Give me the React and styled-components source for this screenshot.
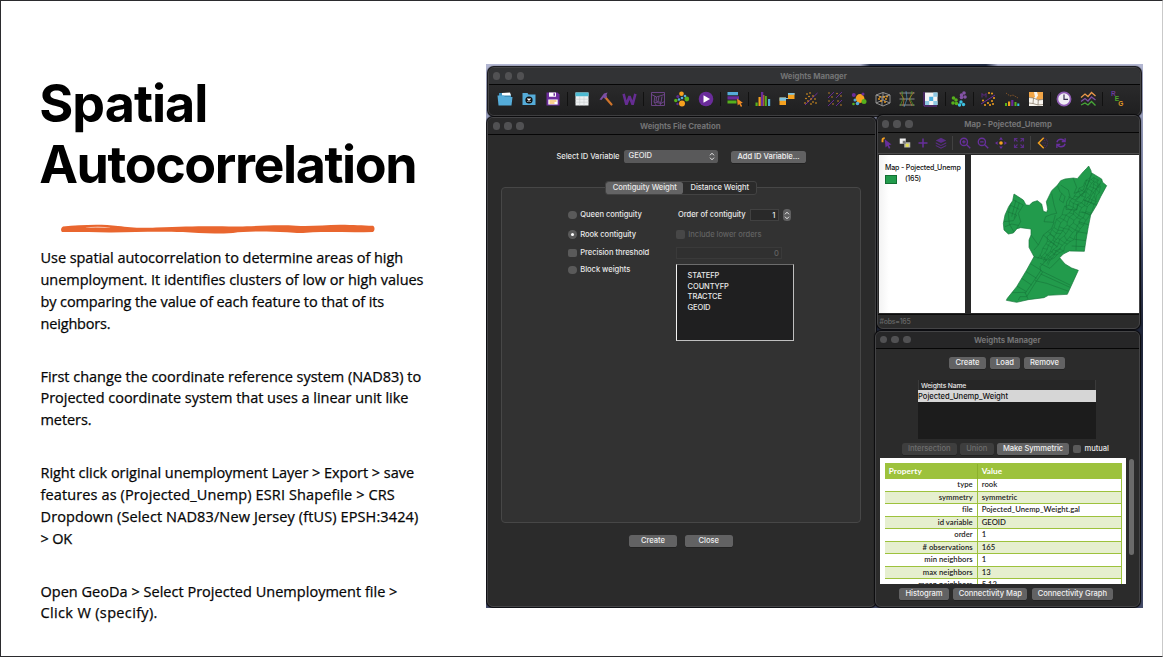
import React from "react";
import styled, { createGlobalStyle, css } from "styled-components";

const GlobalStyle = createGlobalStyle`
  *, *::before, *::after { box-sizing: border-box; }
  body { margin: 0; background: #fff; overflow: hidden; }
`;

const C = {
  purple: "#5c2d91",
  orange: "#f5a11f",
  blue: "#55acd9",
  cyan: "#3cc0e0",
  green: "#56b01c",
};

/* ---------- slide ---------- */

const Slide = styled.main`
  width: 1163px;
  height: 657px;
  display: flex;
  align-items: flex-start;
  background: #fff;
  border: 1px solid #2b2b2e;
  border-right-color: #c9c9c9;
`;

const Copy = styled.section`
  width: 485px;
  padding: 72px 0 0 39px;
  flex: none;
`;

const Heading = styled.h1`
  margin: 0 0 0 -0.8px;
  font: 700 52px/61px Inter, sans-serif;
  color: #000;
`;

const HeadingLine = styled.span`
  display: block;
  white-space: nowrap;
  letter-spacing: ${(p) => p.$ls}px;
`;

const Underline = styled.svg`
  display: block;
  margin: 28px 0 12.2px 20px;
`;

const Body = styled.div`
  display: flex;
  flex-direction: column;
  gap: 31.2px;
  padding-left: 0.5px;
`;

const Paragraph = styled.p`
  margin: 0;
  font: 400 14.5px/21.8px "Open Sans", sans-serif;
  color: #060606;
  -webkit-text-stroke: 0.25px #060606;
`;

const Line = styled.span`
  display: block;
  white-space: nowrap;
  letter-spacing: ${(p) => p.$ls}px;
`;

const paragraphs = [
  [
    ["Use spatial autocorrelation to determine areas of high", -0.05],
    ["unemployment. It identifies clusters of low or high values", -0.04],
    ["by comparing the value of each feature to that of its", -0.117],
    ["neighbors.", -0.17],
  ],
  [
    ["First change the coordinate reference system (NAD83) to", -0.03],
    ["Projected coordinate system that uses a linear unit like", -0.03],
    ["meters.", -0.07],
  ],
  [
    ["Right click original unemployment Layer > Export > save", -0.04],
    ["features as (Projected_Unemp) ESRI Shapefile > CRS", 0.12],
    ["Dropdown (Select NAD83/New Jersey (ftUS) EPSH:3424)", 0.12],
    ["> OK", -0.17],
  ],
  [
    ["Open GeoDa > Select Projected Unemployment file >", 0.02],
    ["Click W (specify).", 0.35],
  ],
];

/* ---------- desktop and windows ---------- */

const Desktop = styled.section`
  position: relative;
  flex: none;
  width: 657px;
  height: 544px;
  margin-top: 63px;
  overflow: hidden;
  background:
    linear-gradient(90deg, transparent 374px, #2b3650 384px, #222c44 500px, transparent 512px) 0 0 / 100% 3px no-repeat,
    linear-gradient(#b3b7d2 0, #9298b6 60px, #7d84a4 110px, #3c4563 190px, #1f2538 260px, #2c3550 400px, #444b68 544px);
`;

const Win = styled.div`
  position: absolute;
  left: ${(p) => p.$x}px;
  top: ${(p) => p.$y}px;
  width: ${(p) => p.$w}px;
  height: ${(p) => p.$h}px;
  display: flex;
  flex-direction: column;
  overflow: hidden;
  border-radius: 6px;
  background: ${(p) => p.$bg || "#2b2b2b"};
  border: 1px solid #444446;
  box-shadow: 0 0 1px 0.5px #0b0b0d;
  color: #e8e8e8;
  font: 500 7.6px/10px Inter, sans-serif;
  letter-spacing: -0.05px;
  white-space: nowrap;
`;

const TitleBar = styled.header`
  flex: none;
  height: ${(p) => p.$h}px;
  display: grid;
  grid-template-columns: 60px 1fr 60px;
  align-items: center;
  padding-right: ${(p) => p.$shift ?? 2}px;
  background: ${(p) => p.$bg};
  border-bottom: 1px solid #060606;
`;

const Lights = styled.div`
  display: flex;
  gap: 4.8px;
  padding-left: ${(p) => p.$pad}px;
`;

const Light = styled.i`
  width: 7.2px;
  height: 7.2px;
  border-radius: 50%;
  background: #515153;
`;

const Title = styled.div`
  text-align: center;
  font-weight: 700;
  font-size: 7.8px;
  letter-spacing: -0.03px;
  color: #737374;
`;

function Titlebar({ title, pad, ...rest }) {
  return (
    <TitleBar {...rest}>
      <Lights $pad={pad}>
        <Light />
        <Light />
        <Light />
      </Lights>
      <Title>{title}</Title>
    </TitleBar>
  );
}

const Toolbar = styled.div`
  flex: none;
  height: ${(p) => p.$h}px;
  display: flex;
  align-items: center;
  padding-left: ${(p) => p.$pad}px;
  padding-bottom: 1px;
  background: ${(p) => p.$bg};
`;

const Cell = styled.span`
  width: ${(p) => p.$w}px;
  flex: none;
  display: flex;
  justify-content: center;
`;

const Divider = styled.span`
  flex: none;
  width: 1px;
  height: ${(p) => p.$h}px;
  margin: 0 ${(p) => (p.$w - 1) / 2}px;
  background: ${(p) => p.$color};
`;

const Button = styled.button`
  flex: none;
  width: ${(p) => p.$w}px;
  height: 12px;
  padding: 0;
  border: 0;
  border-radius: 2.6px;
  background: ${(p) => (p.$off ? "#3e3e3e" : "#626263")};
  color: ${(p) => (p.$off ? "#6e6e6e" : "#f0f0f0")};
  box-shadow: 0 0.5px 0.5px #1a1a1a;
  font: inherit;
  line-height: 12px;
  letter-spacing: -0.05px;
  text-align: center;
`;

/* ---------- weights file creation ---------- */

const IdRow = styled.div`
  display: flex;
  align-items: center;
  height: 13px;
  margin: 15px 0 0 68.4px;
`;

const Select = styled.div`
  width: 94px;
  height: 12.5px;
  margin: 0 13px 0 4.6px;
  padding: 0 3px 1px 4.5px;
  display: flex;
  align-items: center;
  justify-content: space-between;
  border-radius: 2.6px;
  background: #59595a;
`;

const TabBox = styled.div`
  margin: 24px 0 0 13px;
  width: 360px;
  height: 336px;
  border: 1px solid #474747;
  border-radius: 4px;
  background: #323232;
`;

const Tabs = styled.div`
  width: 152px;
  height: 13.5px;
  margin: -7px auto 0;
  display: flex;
  border-radius: 3px;
  background: #2b2b2b;
  border: 1px solid #434343;
`;

const Tab = styled.div`
  width: ${(p) => p.$w}px;
  border-radius: 2.6px;
  text-align: center;
  line-height: 12px;
  background: ${(p) => (p.$on ? "#646465" : "transparent")};
`;

const Options = styled.div`
  display: grid;
  grid-template-columns: 108px 130px;
  margin: 10.5px 0 0 66.3px;
`;

const Choices = styled.div`
  display: grid;
  grid-template-rows: 20px 19px 17.5px;
  grid-auto-rows: 17.5px;
  align-items: center;
  align-content: start;
`;

const Choice = styled.label`
  display: flex;
  align-items: center;
  gap: 3.6px;
  color: ${(p) => (p.$off ? "#626262" : "inherit")};
`;

const Mark = styled.i`
  width: 8.4px;
  height: 8.4px;
  display: grid;
  place-items: center;
  border-radius: ${(p) => (p.$round ? "50%" : "2px")};
  background: ${(p) => (p.$off ? "#474747" : "#5a5a5a")};
  ${(p) =>
    p.$on &&
    css`
      &::after {
        content: "";
        width: 3.6px;
        height: 3.6px;
        border-radius: 50%;
        background: #fff;
      }
    `}
`;

const OrderRow = styled.div`
  display: flex;
  align-items: center;
  gap: 4.3px;
  padding-left: 1.7px;
`;

const Field = styled.div`
  width: ${(p) => p.$w}px;
  height: 12px;
  padding-right: 2.5px;
  text-align: right;
  line-height: 11px;
  color: ${(p) => (p.$off ? "#626262" : "inherit")};
  background: ${(p) => (p.$off ? "#303030" : "#292929")};
  border: 1px solid ${(p) => (p.$off ? "#3a3a3a" : "#414141")};
`;

const Stepper = styled.div`
  width: 8px;
  height: 12px;
  display: grid;
  place-items: center;
  border-radius: 3.5px;
  background: #606061;
`;

const FieldList = styled.div`
  width: 118px;
  height: 77px;
  margin-top: 2.2px;
  padding: 6.3px 0 0 10.3px;
  line-height: 10.7px;
  font-size: 7.5px;
  letter-spacing: -0.1px;
  background: #1f1f20;
  border: 1px solid #bfbfbf;
  border-left-color: #f2f2f2;
  border-top-color: #6c6c6c;
`;

const Actions = styled.div`
  display: flex;
  gap: ${(p) => p.$gap}px;
  padding-left: ${(p) => p.$left}px;
  margin-top: ${(p) => p.$top}px;
  align-items: center;
  flex: none;
`;

/* ---------- map ---------- */

const MapArea = styled.div`
  display: grid;
  grid-template-columns: 86px 168px;
  column-gap: 6px;
  height: 161.5px;
  padding: 1px 0 1.5px 1px;
  border-top: 1px solid #4a4a4a;
  border-bottom: 1px solid #0d0d0d;
  background: #282828;
`;

const Legend = styled.div`
  background: linear-gradient(90deg, #f3f3f3, #fff 10px);
  padding: 7.5px 0 0 6.4px;
  color: #111;
  font-size: 7.1px;
  letter-spacing: -0.17px;
`;

const LegendItem = styled.div`
  display: flex;
  align-items: center;
  gap: 8px;
  margin-top: 1.5px;
`;

const Swatch = styled.i`
  width: 12px;
  height: 9px;
  background: #229b4c;
  border: 1px solid #136f33;
`;

const MapCanvas = styled.svg`
  display: block;
  width: 168px;
  height: 158px;
  background: #fff;
`;

const Status = styled.div`
  padding: 2px 0 0 2px;
  color: #666;
  font-size: 7px;
  letter-spacing: -0.25px;
`;

/* ---------- weights manager ---------- */

const List = styled.div`
  width: 178px;
  height: 59px;
  margin: 11.5px 0 4px 42px;
  background: #1c1c1c;
  flex: none;
`;

const ListHead = styled.div`
  height: 10px;
  padding-left: 2px;
  background: #262626;
  border-left: 1px solid #3b3b3b;
  border-right: 1px solid #3b3b3b;
  font-size: 6.8px;
  line-height: 11px;
  letter-spacing: -0.18px;
`;

const ListRow = styled.div`
  height: 11.5px;
  line-height: 13.4px;
  color: #111;
  background: #d6d6d6;
  letter-spacing: -0.01px;
`;

const Report = styled.div`
  flex: none;
  display: flex;
  align-items: flex-start;
  gap: 2.5px;
  margin: 3px 0 4px 3.7px;
`;

const Page = styled.div`
  width: 246.5px;
  height: 126px;
  overflow: hidden;
  padding: 4.5px 4px 0 5px;
  background: #fff;
`;

const Scroll = styled.i`
  width: 5px;
  height: 96px;
  margin-top: 1px;
  border-radius: 3px;
  background: #6a6a6a;
`;

const Props = styled.div`
  border: 1px solid #9dc23c;
  border-left: 0;
  font: 600 7.7px/11.6px Lato, sans-serif;
  letter-spacing: 0.02px;
  color: #1c1c1c;
`;

const PropRow = styled.div`
  display: grid;
  grid-template-columns: 93px 1fr;
  height: ${(p) => (p.$head ? 15.5 : 12.5)}px;
  border-bottom: 1px solid #9dc23c;
  background: ${(p) => (p.$head ? "#9dc23c" : p.$alt ? "#e6efcf" : "#fff")};
  ${(p) =>
    p.$head &&
    css`
      color: #fff;
      font-weight: 700;
      font-size: 8.2px;
      line-height: 15px;
    `}
`;

const Key = styled.div`
  text-align: ${(p) => (p.$left ? "left" : "right")};
  padding: 0 4px;
  letter-spacing: ${(p) => (p.$left ? 0.14 : 0.02)}px;
  border-right: 1px solid ${(p) => (p.$left ? "#8bb02c" : "#9dc23c")};
`;

const Val = styled.div`
  padding-left: 4px;
`;

/* ---------- drawings ---------- */

const dots = (pts, fill, r = 0.9) => pts.map(([x, y], i) => <circle key={fill + i} cx={x} cy={y} r={r} fill={fill} />);

const I = ({ s = 16, children }) => (
  <svg width={s} height={s} viewBox="0 0 16 16" fill="none">
    {children}
  </svg>
);

const toolIcons = [
  <I><path d="M2 2h5l1 1.5h6V13H2z" fill="#3d8fba" /><path d="M5 2l8-.5 1 3H5z" fill="#fff" /><path d="M.5 4.5h6L8 6h7.5l-1 8.5H1.5z" fill={C.blue} /></I>,
  <I><path d="M1.5 2h5l1 1.5h7V14h-13z" fill={C.blue} /><circle cx="8" cy="9" r="3.6" fill="#101010" /><path d="M6.5 7.5l3 3m0-3l-3 3" stroke="#fff" strokeWidth="1.3" /></I>,
  <I><path d="M1.5 1.5h11l2 2v11h-13z" fill="#6c2d9c" /><path d="M4 1.5h7v4.3H4z" fill="#fff" /><path d="M8.5 2.3h1.5v2.5H8.5z" fill="#6c2d9c" /><path d="M3.3 8.5h9.4v5H3.3z" fill="#fff" /><path d="M4.5 10h7M4.5 12h5" stroke={C.orange} strokeWidth="1" /></I>,
  "|",
  <I><path d="M1.5 1.5h13v13h-13z" fill="#eef1f2" /><path d="M1.5 1.5h13v3.7h-13z" fill="#4dbbd3" /><path d="M1.5 8.2h13M1.5 11.2h13M5.7 5v9.5M10 5v9.5" stroke="#c9cdd0" strokeWidth=".6" /></I>,
  <I><path d="M7 6l6.5 7.5" stroke="#cf742b" strokeWidth="2.2" strokeLinecap="round" /><path d="M1.5 8.5L6 2.5 9.5 1.5 8.5 4 9 6 7 7.5 5.5 6.5 3.5 9z" fill="#7c4fa3" /></I>,
  <I s={15}><path d="M1.7 2l3 11.5L8 4.5l3.3 9L14.3 2" stroke="#652d92" strokeWidth="2.7" strokeLinejoin="bevel" /></I>,
  "|",
  <I><path d="M1.5 1.5h13v13h-13zM1.5 3.5l5 2.500 8-2.500M5 5l-1 6 2.500 3.500M6.500 6l-.5 4 5 1.500 1-6M4 11l7 1.500 3.500-2M9 5.500l-1 5M11 11.500l-1 3" stroke="#72478f" strokeWidth=".9" /></I>,
  <I><circle cx="7.5" cy="2.7" r="2.3" fill={C.orange} /><circle cx="8" cy="12.5" r="3" fill={C.orange} /><circle cx="12.8" cy="8" r="2.4" fill={C.green} /><circle cx="1.8" cy="9.5" r="1.7" fill={C.green} /><circle cx="3.8" cy="5.5" r="1.5" fill={C.purple} /><circle cx="3.5" cy="13" r="1.2" fill={C.purple} />{dots([[8, 7], [5, 8.5], [11, 5]], C.blue, 1.3)}</I>,
  <I><circle cx="8" cy="8" r="7.3" fill="#6a2c9b" /><path d="M5.5 4.2v7.6L12 8z" fill="#fff" /></I>,
  "|",
  <I><path d="M.5 1h10.500v3.300H.5z" fill={C.blue} /><path d="M.5 5.300H12v3.300H.5z" fill="#6a2c9b" /><path d="M.5 9.600h9v3h-9z" fill={C.green} /><path d="M10 7.500l.7 7 1.500-1.600 1.800 3 1.200-.8-1.500-2.700 2.100-.6z" fill="#f08a24" /></I>,
  "|",
  <I><path d="M.5 11.500h2.200V15H.5zM10 5h1.800v10H10z" fill={C.green} /><path d="M3.500 6h2.200v9H3.500zM8.300 4h1v11h-1z" fill={C.orange} /><path d="M6 1h2.300v14H6z" fill="#6a2c9b" /><path d="M13 8h2.200v7H13z" fill={C.blue} /></I>,
  <I><path d="M.5 6.500H7V14H.5z" fill={C.orange} /><path d="M.5 6.500H7v3.200H.5z" fill="#7cc0de" /><path d="M9 2h6.500v6H9z" fill={C.orange} /><path d="M9 2h6.500v1.800H9z" fill="#7cc0de" /><path d="M7 7.500h2" stroke="#7cc0de" /></I>,
  <I><path d="M2 14L14.500 2" stroke="#6a2c9b" strokeWidth="1" />{dots([[4, 3], [7, 2], [6, 5.5], [3, 7.5], [8, 8], [5, 10], [10, 5], [12, 8], [10, 11], [13, 12], [8, 13], [2, 12]], C.orange, 0.8)}</I>,
  <I><path d="M1 7l6-6M9 7l6-6M1 15l6-6M9 15l6-6" stroke="#6a2c9b" strokeWidth=".9" />{dots([[2, 2], [5, 6], [10, 2.5], [14, 5], [2, 10], [6, 13], [11, 10], [14, 14]], "#c78428", 0.8)}</I>,
  <I><circle cx="9" cy="7.5" r="4.4" fill={C.orange} /><circle cx="2.8" cy="4" r="2" fill="#6a2c9b" /><circle cx="13" cy="10.5" r="2.5" fill={C.green} /><circle cx="4" cy="9" r="1.5" fill={C.blue} /><circle cx="6.5" cy="12.5" r="1.8" fill={C.blue} /><circle cx="12" cy="3" r="1.5" fill="#6a2c9b" /><circle cx="2.5" cy="13" r="1.3" fill={C.green} /></I>,
  <I><path d="M1 4l7-2.500L15 4v8l-7 3-7-3zM1 4l6 2 8-2M7 6v9M1 12l7-3 7 3M8 1.500V9" stroke="#9b9b9b" strokeWidth=".9" />{dots([[4, 8], [6, 10], [9, 6], [11, 8], [12, 5.5], [10, 11], [5, 6]], C.orange, 0.9)}</I>,
  <I><path d="M.5 2h15M.5 8h15M.5 14h15" stroke="#8b8b8b" strokeWidth="1" /><path d="M3 0l1 8-3 7M13 0l-2 8 4 7" stroke={C.green} strokeWidth=".6" /><path d="M7 0l1 8-3 8" stroke={C.blue} strokeWidth=".6" /><path d="M15 1L10 8l3 7M1 2l4 6-1 7" stroke="#d68b2d" strokeWidth=".6" /></I>,
  <I><path d="M1 1v14h13" stroke="#6a2c9b" strokeWidth="1" /><path d="M2 1.500h12.500v12.500H2z" fill="#f4f4f4" /><path d="M10.300 1.500h4.200v4.200h-4.200zM2 9.900h4.200v4.100H2zM10.300 9.900h4.200v4.100h-4.200z" fill="#8fc9e3" /><path d="M6.200 5.700h4v4.200h-4z" fill="#47aede" /></I>,
  "|",
  <I>{dots([[13, 2], [10.5, 4], [14, 6], [10.5, 6.5]], "#8453a6", 1.8)}{dots([[2.5, 7], [5, 9], [2, 12], [5.5, 12.5]], C.green, 1.8)}{dots([[10, 11], [12.5, 13.5], [8.5, 14]], C.cyan, 1.7)}</I>,
  "|",
  <I><path d="M1 13L15 4" stroke="#6a2c9b" strokeWidth="1" /><path d="M2 6.500V2.500l2 2 2-2v4" stroke="#6a2c9b" strokeWidth=".8" />{dots([[9, 2], [12, 2.5], [14, 7], [12, 10], [8, 12], [5, 14], [3, 9.5], [13, 13], [10, 14]], C.orange, 1)}</I>,
  <I><path d="M2 2l4 3 3-1 5 3" stroke="#9b5f2a" strokeWidth=".8" strokeDasharray="1.5 1" /><path d="M1 12h2v3H1zM10.500 11h2v4h-2z" fill={C.green} /><path d="M4 10.500h2.200V15H4z" fill={C.orange} /><path d="M7.200 9h2.200v6H7.200z" fill="#6a2c9b" /><path d="M13.300 12.500h2V15h-2z" fill={C.cyan} /></I>,
  <I><path d="M1 1h14v14H1z" fill="#f8f5ef" /><path d="M1 1h5l1 5-2 1-4-1zM9 1h6v7l-4 1-3-1.500 2-3z" fill="#f3a647" /><path d="M1 6.500l4.500.5 4.500 2 5-.5M1 12l4 .5 5 1.500 5-.5M5.500 7L5 12.500M10.300 9L10 14" stroke="#6b5a45" strokeWidth=".6" /></I>,
  "|",
  <I><circle cx="8" cy="8" r="6.6" fill="#f1edf5" stroke="#8e5bb3" strokeWidth="1.7" /><path d="M8 3.5V8.300h4" stroke="#383051" strokeWidth="1.2" /></I>,
  <I><path d="M1 6.500l4-3.500 3 2.500 3.500-4L15.500 5" stroke="#ec9a4a" strokeWidth="1.3" /><path d="M1 10.500l4-3 3 2.500 3.500-4 4 3" stroke="#7c4fa3" strokeWidth="1.3" /><path d="M1 14l4-2 3 2 3.500-3.500 4 4" stroke="#47a838" strokeWidth="1.3" /></I>,
  "|",
];

const Reg = styled.span`
  display: flex;
  font: 700 6.5px/5.5px "Liberation Sans", sans-serif;
  height: 16px;
`;

const RegLetter = styled.span`
  color: ${(p) => p.$c};
  margin: ${(p) => p.$drop}px -0.8px 0 0;
  height: 5.5px;
`;

const purpleStroke = { stroke: "#672f9c", strokeWidth: 1.8 };
const mapIcons = [
  <I s={12}><path d="M2 7V4q0-2.500 3-2.500" stroke={C.orange} strokeWidth="2.5" /><path d="M5 3l1 11 2.500-2.500 2 4 2-1-2-4 3.500-.5z" fill="#672f9c" /></I>,
  <I s={12}><path d="M1 2h8v7H1z" fill="#f1f1f1" /><path d="M7 7h8v7H7z" fill="#b9b9b0" /><path d="M5 5h4v4H5z" fill="#777" /><path d="M9 9h4v4H9z" fill="#e3dc4b" /></I>,
  <I s={12}><path d="M8 2v12M2 8h12" stroke="#672f9c" strokeWidth="2" /></I>,
  <I s={12}><path d="M8 1l7 3.500L8 8 1 4.500zM1 7l7 3.500L15 7v1.500L8 12 1 8.500zM1 10.500L8 14l7-3.500V12l-7 3.500L1 12z" fill="#5a2d86" /></I>,
  "|",
  <I s={12}><circle cx="6.5" cy="6.5" r="4.8" {...purpleStroke} /><path d="M10 10l5 5M6.500 4.200v4.600M4.200 6.500h4.600" {...purpleStroke} /></I>,
  <I s={12}><circle cx="6.5" cy="6.5" r="4.8" {...purpleStroke} /><path d="M10 10l5 5M4.200 6.500h4.600" {...purpleStroke} /></I>,
  <I s={12}><path d="M8 0l2.500 3.500h-5zM8 16l2.500-3.500h-5zM0 8l3.500-2.500v5zM16 8l-3.500-2.500v5z" fill="#672f9c" /><circle cx="8" cy="8" r="2.4" fill={C.orange} /></I>,
  <I s={12}><path d="M2 6V2h4M10 2h4v4M14 10v4h-4M6 14H2v-4M2 2l4 4M14 2l-4 4M14 14l-4-4M2 14l4-4" stroke="#5a2d86" strokeWidth="1.5" /></I>,
  "|",
  <I s={12}><path d="M9 1L2 8l7 7" stroke={C.orange} strokeWidth="2" /><path d="M9 1q5 1 5 7t-5 7M7 8h6M9 5l4-1M9 11l4 1" stroke="#4d2a70" strokeWidth="1" strokeDasharray="2 1" /></I>,
  <I s={12}><path d="M2.500 7Q3.500 3 8 3q3 0 4.500 2.500M13.500 9Q12.500 13 8 13q-3 0-4.500-2.500M13.500 1.500v4.500H9M2.500 14.500V10H7" stroke="#672f9c" strokeWidth="1.8" /></I>,
];

const county =
  "M656 48L663 62 664 68 695 87 698 97 710 107 692 140 680 165 662 195 655 230 648 270 643 304 598 303 580 312 569 323 585 342 605 354 625 361 608 398 592 433 535 436 522 443 475 449 440 457 409 451 412 445 440 410 470 360 492 320 477 292 477 270 483 255 483 237 452 233 441 236 430 249 415 252 402 240 400 220 405 195 416 170 428 152 432 132 460 150 468 165 478 166 487 157 502 152 515 162 520 184 530 187 533 178 529 155 545 122 562 106 572 92 585 87 610 84 622 86 640 65 650 55Z";

/* Tract boundaries packed around the urban corridor that crosses the county. */
function tractMesh() {
  const at = (i, j) => {
    const t = i / 26;
    const wob = (n) => (((Math.sin(n * 12.9898 + i * 78.233 + j * 37.719) * 43758.5453) % 1) + 1) % 1 - 0.5;
    const spread = 7 + 8 * Math.sin(t * Math.PI);
    const cx = 678 - 158 * Math.pow(t, 1.15);
    const cy = 84 + 250 * t;
    return [cx + (j - 2.5) * spread * 0.85 + wob(1) * 8, cy + (j - 2.5) * spread * 0.5 + wob(2) * 8];
  };
  let d = "";
  for (let i = 0; i < 26; i++)
    for (let j = 0; j < 6; j++) {
      const a = at(i, j);
      const b = at(i + 1, j);
      d += `M${a[0].toFixed(1)} ${a[1].toFixed(1)}L${b[0].toFixed(1)} ${b[1].toFixed(1)}`;
      if (j < 5 && (i * 7 + j * 3) % 4) {
        const c = at(i, j + 1);
        d += `M${a[0].toFixed(1)} ${a[1].toFixed(1)}L${c[0].toFixed(1)} ${c[1].toFixed(1)}`;
      }
    }
  return d;
}

const tracts =
  "M430 150L460 165 445 190 452 215 440 236M420 165L448 178M412 185L440 195 430 212 402 215M405 230L425 222 445 226M425 150L415 190 418 222 432 246M438 150L425 200M448 158L432 205" +
  "M545 130L552 165 560 190 545 193 527 200 522 215 550 217 556 195M562 106L570 125 585 140 580 158 568 150 575 130M572 105L595 120 600 140 590 155 588 178 620 180 625 160M610 86L620 112 612 130 640 120 650 90M595 140L615 150 638 130" +
  "M483 255L505 285 492 300M505 285L520 255 545 235 552 217M520 255L560 290M535 245L560 270M492 320L530 330 510 350 512 362M530 330L572 295M510 340L540 355 572 323" +
  "M480 340L515 362M468 365L500 385M455 385L485 405M440 408L470 425M425 428L465 427 475 449M512 362L490 395 465 430M518 366L495 400 470 440M512 362L600 405M512 372L600 412M495 392L530 400 596 424M445 450L450 440 470 440" +
  "M690 100L665 135 650 165M682 165L640 150M665 195L635 185M658 225L625 215M652 250L620 245M648 272L615 268M646 290L605 288M620 245L618 300M665 68L655 100 635 140";

const ToolSet = ({ icons, w, sep, h, color }) =>
  icons.map((ic, i) =>
    ic === "|" ? <Divider key={i} $w={sep} $h={h} $color={color} /> : <Cell key={i} $w={w}>{ic}</Cell>
  );

const Chevrons = () => (
  <svg width="6" height="9" viewBox="0 0 6 9" fill="none" stroke="#e6e6e6" strokeWidth="1">
    <path d="M1 3.300L3 1.200l2 2.100M1 5.700l2 2.100 2-2.100" />
  </svg>
);

const reportRows = [
  ["type", "rook"],
  ["symmetry", "symmetric"],
  ["file", "Pojected_Unemp_Weight.gal"],
  ["id variable", "GEOID"],
  ["order", "1"],
  ["# observations", "165"],
  ["min neighbors", "1"],
  ["max neighbors", "13"],
  ["mean neighbors", "5.12"],
];

export default function App() {
  return (
    <>
      <GlobalStyle />
      <Slide>
        <Copy>
          <Heading>
            <HeadingLine $ls={-0.95}>Spatial</HeadingLine>
            <HeadingLine $ls={-1.42}>Autocorrelation</HeadingLine>
          </Heading>
          <Underline width="316" height="12" viewBox="0 0 316 12">
            <path
              d="M3 3.600C20 2 40 .9 58 3c12 1.300 20 2.400 38 1.500 35-1.300 50-1.600 80-1 12 .4 35-2 60-.8 16 .8 28-.8 44-1 14 0 22 .8 33 1 2 1 2 5 0 6.200-20 .6-40-.2-60 .3-10 1-16 1-26 0-22-1-42-1-54 .8-16 1-34 .6-50-.9-30-1-50 .4-74 .3C32 9.400 18 8.800 2 9 .6 8 .6 5 3 3.600z"
              fill="#e9662f"
            />
            <path d="M24 4.700q14-1.700 28 .1-14-.4-28-.1z" fill="#fbe3d8" />
          </Underline>
          <Body>
            {paragraphs.map((lines, i) => (
              <Paragraph key={i}>
                {lines.map(([text, ls]) => (
                  <Line key={text} $ls={ls}>{text}</Line>
                ))}
              </Paragraph>
            ))}
          </Body>
        </Copy>

        <Desktop>
          <Win $x={2} $y={3} $w={653} $h={49} $bg="#252526">
            <Titlebar title="Weights Manager" $h={17} pad={4} $bg="#323335" />
            <Toolbar $h={29.5} $pad={4.2} $bg="linear-gradient(#2a2a2b, #1f1f20)">
              <ToolSet icons={toolIcons} w={24} sep={4.46} h={14} color="#111" />
              <Cell $w={24}>
                <Reg>
                  <RegLetter $c="#6a3a9a" $drop={0}>R</RegLetter>
                  <RegLetter $c="#4ea62a" $drop={5}>E</RegLetter>
                  <RegLetter $c="#e09a25" $drop={10}>G</RegLetter>
                </Reg>
              </Cell>
            </Toolbar>
          </Win>

          <Win $x={1} $y={53} $w={388.5} $h={490}>
            <Titlebar title="Weights File Creation" $h={17} pad={4.5} $bg="#2a2a2b" />
            <IdRow>
              <span>Select ID Variable</span>
              <Select>
                <span>GEOID</span>
                <Chevrons />
              </Select>
              <Button $w={75}>Add ID Variable...</Button>
            </IdRow>
            <TabBox>
              <Tabs>
                <Tab $w={78} $on>Contiguity Weight</Tab>
                <Tab $w={73}>Distance Weight</Tab>
              </Tabs>
              <Options>
                <Choices>
                  <Choice><Mark $round />Queen contiguity</Choice>
                  <Choice><Mark $round $on />Rook contiguity</Choice>
                  <Choice><Mark />Precision threshold</Choice>
                  <Choice><Mark $round />Block weights</Choice>
                </Choices>
                <div>
                  <Choices>
                    <OrderRow>
                      <span>Order of contiguity</span>
                      <Field $w={29}>1</Field>
                      <Stepper><Chevrons /></Stepper>
                    </OrderRow>
                    <Choice $off><Mark $off />Include lower orders</Choice>
                    <Field $w={106} $off>0</Field>
                  </Choices>
                  <FieldList>
                    <div>STATEFP</div>
                    <div>COUNTYFP</div>
                    <div>TRACTCE</div>
                    <div>GEOID</div>
                  </FieldList>
                </div>
              </Options>
            </TabBox>
            <Actions $left={141} $top={12} $gap={7.5}>
              <Button $w={48}>Create</Button>
              <Button $w={48.5}>Close</Button>
            </Actions>
          </Win>

          <Win $x={390.5} $y={51} $w={263.5} $h={214}>
            <Titlebar title="Map - Pojected_Unemp" $h={17} pad={4} $shift={0.5} $bg="#29292a" />
            <Toolbar $h={20.4} $pad={0.5} $bg="#2b2b2b">
              <ToolSet icons={mapIcons} w={18} sep={5.9} h={14} color="#414141" />
            </Toolbar>
            <MapArea>
              <Legend>
                <div>Map - Pojected_Unemp</div>
                <LegendItem><Swatch />(165)</LegendItem>
              </Legend>
              <MapCanvas viewBox="303 15 504 474">
                <clipPath id="county"><path d={county} /></clipPath>
                <path d={county} fill="#229b4c" stroke="#15753a" strokeWidth="2" />
                <g clipPath="url(#county)" fill="none" stroke="#167238">
                  <path d={tracts} strokeWidth="1.6" />
                  <path d={tractMesh()} strokeWidth="1.3" />
                </g>
              </MapCanvas>
            </MapArea>
            <Status>#obs=165</Status>
          </Win>

          <Win $x={389} $y={267} $w={265} $h={276}>
            <Titlebar title="Weights Manager" $h={16.5} pad={3.5} $shift={0.5} $bg="#262627" />
            <Actions $left={73} $top={8} $gap={4}>
              <Button $w={37}>Create</Button>
              <Button $w={30}>Load</Button>
              <Button $w={41}>Remove</Button>
            </Actions>
            <List>
              <ListHead>Weights Name</ListHead>
              <ListRow>Pojected_Unemp_Weight</ListRow>
            </List>
            <Actions $left={26} $top={0} $gap={3.5}>
              <Button $w={54.5} $off>Intersection</Button>
              <Button $w={33.5} $off>Union</Button>
              <Button $w={72}>Make Symmetric</Button>
              <Choice><Mark />mutual</Choice>
            </Actions>
            <Report>
              <Page>
                <Props>
                  <PropRow $head><Key $left>Property</Key><Val>Value</Val></PropRow>
                  {reportRows.map(([k, v], i) => (
                    <PropRow key={k} $alt={i % 2 === 1}><Key>{k}</Key><Val>{v}</Val></PropRow>
                  ))}
                </Props>
              </Page>
              <Scroll />
            </Report>
            <Actions $left={23} $top={0} $gap={4.3}>
              <Button $w={50}>Histogram</Button>
              <Button $w={74}>Connectivity Map</Button>
              <Button $w={81.5}>Connectivity Graph</Button>
            </Actions>
          </Win>
        </Desktop>
      </Slide>
    </>
  );
}
